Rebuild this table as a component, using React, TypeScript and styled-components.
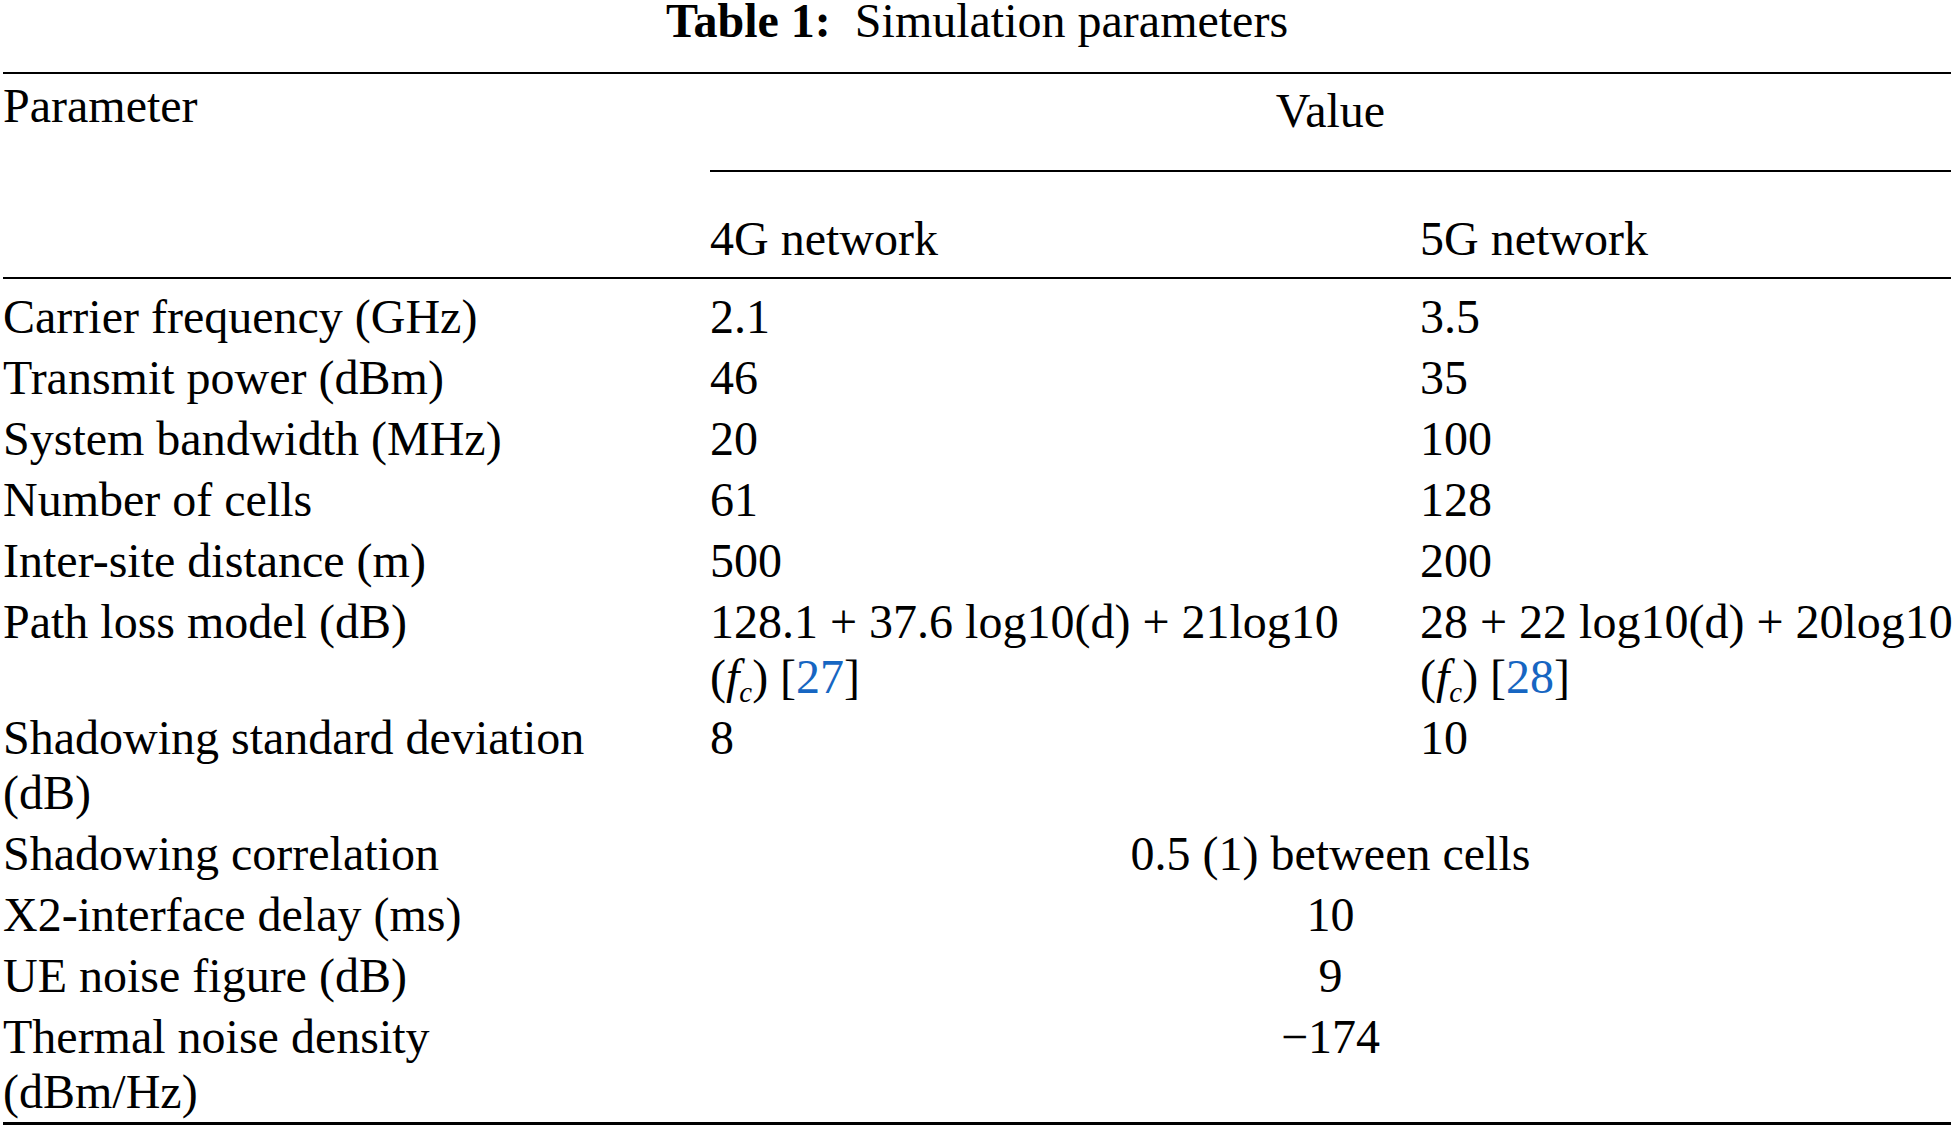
import React from 'react';
import styled, { createGlobalStyle } from 'styled-components';

const GlobalStyle = createGlobalStyle`
  html, body {
    margin: 0;
    padding: 0;
    background: #fff;
  }
  body {
    color: #000;
    font-family: "Liberation Serif", "Times New Roman", serif;
  }
`;

const Page = styled.div`
  padding: 0 3px;
  width: 1948px;
`;

const Caption = styled.div`
  font-size: 48px;
  line-height: 42px;
  text-align: center;
  margin-bottom: 30px;
  white-space: nowrap;
`;

const CaptionLabel = styled.b`
  font-weight: 700;
`;

const Table = styled.table`
  width: 1948px;
  table-layout: fixed;
  border-collapse: separate;
  border-spacing: 0;
  border-top: 2px solid #000;
  border-bottom: 3px solid #000;
  font-size: 48px;
  line-height: 55px;
`;

const HeadCell = styled.th<{ $center?: boolean; $pt: number; $pb?: number; $rule?: boolean }>`
  font-weight: 400;
  text-align: ${(p) => (p.$center ? 'center' : 'left')};
  vertical-align: top;
  white-space: nowrap;
  padding: ${(p) => p.$pt}px 0 ${(p) => p.$pb ?? 0}px 0;
  border-bottom: ${(p) => (p.$rule ? '2px solid #000' : 'none')};
`;

const Body = styled.tbody`
  tr:first-child td {
    padding-top: 10px;
  }
`;

const Cell = styled.td<{ $center?: boolean }>`
  padding: 3px 0;
  vertical-align: top;
  white-space: nowrap;
  text-align: ${(p) => (p.$center ? 'center' : 'left')};
`;

const Sub = styled.span`
  font-style: italic;
  font-size: 0.6em;
  line-height: 0;
  vertical-align: -0.3em;
`;

const Ref = styled.span`
  color: #1766c2;
`;

const Fc = () => (
  <>
    (<i>f</i>
    <Sub>c</Sub>)
  </>
);

type Row =
  | { param: React.ReactNode; g4: React.ReactNode; g5: React.ReactNode }
  | { param: React.ReactNode; both: React.ReactNode };

const rows: Row[] = [
  { param: 'Carrier frequency (GHz)', g4: '2.1', g5: '3.5' },
  { param: 'Transmit power (dBm)', g4: '46', g5: '35' },
  { param: 'System bandwidth (MHz)', g4: '20', g5: '100' },
  { param: 'Number of cells', g4: '61', g5: '128' },
  { param: 'Inter-site distance (m)', g4: '500', g5: '200' },
  {
    param: 'Path loss model (dB)',
    g4: (
      <>
        128.1 + 37.6 log10(d) + 21log10
        <br />
        <Fc /> [<Ref>27</Ref>]
      </>
    ),
    g5: (
      <>
        28 + 22 log10(d) + 20log10
        <br />
        <Fc /> [<Ref>28</Ref>]
      </>
    ),
  },
  {
    param: (
      <>
        Shadowing standard deviation
        <br />
        (dB)
      </>
    ),
    g4: '8',
    g5: '10',
  },
  { param: 'Shadowing correlation', both: '0.5 (1) between cells' },
  { param: 'X2-interface delay (ms)', both: '10' },
  { param: 'UE noise figure (dB)', both: '9' },
  {
    param: (
      <>
        Thermal noise density
        <br />
        (dBm/Hz)
      </>
    ),
    both: '\u2212174',
  },
];

export default function App() {
  return (
    <Page>
      <GlobalStyle />
      <Caption>
        <CaptionLabel>Table 1:</CaptionLabel>
        {'\u2002'}Simulation parameters
      </Caption>
      <Table>
        <colgroup>
          <col style={{ width: 707 }} />
          <col style={{ width: 710 }} />
          <col />
        </colgroup>
        <thead>
          <tr>
            <HeadCell rowSpan={2} $pt={4} $rule>
              Parameter
            </HeadCell>
            <HeadCell colSpan={2} $center $pt={9} $pb={32} $rule>
              Value
            </HeadCell>
          </tr>
          <tr>
            <HeadCell $pt={39} $pb={11} $rule>
              4G network
            </HeadCell>
            <HeadCell $pt={39} $pb={11} $rule>
              5G network
            </HeadCell>
          </tr>
        </thead>
        <Body>
          {rows.map((row, i) => (
            <tr key={i}>
              <Cell>{row.param}</Cell>
              {'both' in row ? (
                <Cell colSpan={2} $center>
                  {row.both}
                </Cell>
              ) : (
                <>
                  <Cell>{row.g4}</Cell>
                  <Cell>{row.g5}</Cell>
                </>
              )}
            </tr>
          ))}
        </Body>
      </Table>
    </Page>
  );
}
